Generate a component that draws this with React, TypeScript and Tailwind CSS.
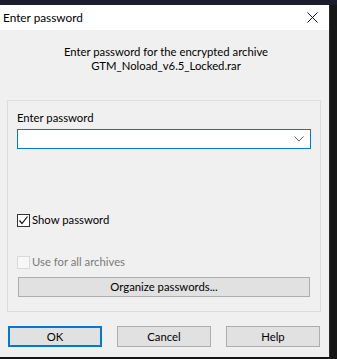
const font = { fontFamily: 'Lato, "Noto Sans", sans-serif' };

const Chevron = () => (
  <svg width="10" height="6" viewBox="0 0 10 6" className="text-[#606060]">
    <path d="M0.5 0.5 L5 5 L9.5 0.5" fill="none" stroke="currentColor" strokeWidth="1" />
  </svg>
);

const CloseIcon = () => (
  <svg width="11" height="11" viewBox="0 0 11 11">
    <path d="M0.5 0.5 L10.5 10.5 M10.5 0.5 L0.5 10.5" stroke="#111" strokeWidth="1" />
  </svg>
);

const Check = () => (
  <svg width="11" height="11" viewBox="0 0 11 11">
    <path d="M1.5 5.5 L4 8.5 L9.5 1.5" fill="none" stroke="#111" strokeWidth="1.2" />
  </svg>
);

export default function App() {
  return (
    <div className="w-[337px] h-[359px] bg-[#141414] flex flex-col overflow-hidden" style={font}>
      <div className="h-[5px] bg-[#1a1e2c] shrink-0"></div>
      <div className="flex flex-1">
        <div className="w-[329px] h-[352px] flex flex-col text-[11.3px] leading-[14px] text-[#000]">
          {/* title bar */}
          <div className="h-[25px] bg-white flex items-center justify-between pl-[3px] pr-[11px]">
            <span className="text-[11.8px] text-black">Enter password</span>
            <CloseIcon />
          </div>

          <div className="flex-1 bg-[#f0f0f0] flex flex-col">
            <div className="pt-[15px] flex flex-col items-center pl-[3px]">
              <span>Enter password for the encrypted archive</span>
              <span>GTM_Noload_v6.5_Locked.rar</span>
            </div>

            <div className="mt-[27px] ml-[7px] w-[314px] border border-[#dcdcdc] flex flex-col px-[9px] pt-[10px] pb-[14px]">
              <span>Enter password</span>
              <div className="mt-[4px] h-[20px] w-[294px] bg-white border border-[#0078d7] flex items-center justify-end pr-[6px]">
                <Chevron />
              </div>

              <div className="mt-[64px] flex items-center gap-[2px] h-[14px]">
                <div className="w-[13px] h-[13px] border border-[#333] bg-white flex items-center justify-center">
                  <Check />
                </div>
                <span>Show password</span>
              </div>

              <div className="mt-[28px] flex items-center gap-[2px] h-[14px]">
                <div className="w-[13px] h-[13px] border border-[#d9d9d9] bg-[#f7f7f7]"></div>
                <span className="text-[#7a7a7a]">Use for all archives</span>
              </div>

              <button className="mt-[8px] ml-[1px] w-[292px] h-[20px] bg-[#e1e1e1] border border-[#adadad] flex items-center justify-center">
                Organize passwords...
              </button>
            </div>

            <div className="mt-[14px] pl-[8px] flex gap-[15px]">
              <button className="w-[94px] h-[21px] bg-[#e1e1e1] border-2 border-[#0078d7] flex items-center justify-center">
                OK
              </button>
              <button className="w-[94px] h-[21px] bg-[#e1e1e1] border border-[#adadad] flex items-center justify-center">
                Cancel
              </button>
              <button className="w-[94px] h-[21px] bg-[#e1e1e1] border border-[#adadad] flex items-center justify-center">
                Help
              </button>
            </div>
          </div>
        </div>
        <div className="w-[8px] border-l border-[#2a2a2a] bg-[#161616]"></div>
      </div>
    </div>
  );
}
